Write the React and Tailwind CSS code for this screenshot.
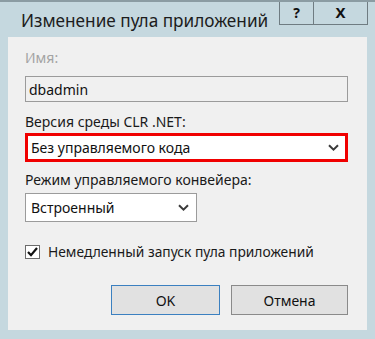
const font = { fontFamily: '"Noto Sans", "Liberation Sans", sans-serif' };

function Chevron() {
  return (
    <svg width="11" height="7" viewBox="0 0 11 7" className="shrink-0">
      <path d="M1 1.2 L5.5 5.6 L10 1.2" fill="none" stroke="#3a3a3a" strokeWidth="2" />
    </svg>
  );
}

function Label({ children, muted, className = "" }) {
  return (
    <div className={`text-[14px] leading-[20px] ${muted ? "text-[#a3a3a3]" : "text-[#1a1a1a]"} ${className}`}>
      {children}
    </div>
  );
}

export default function App() {
  return (
    <div
      className="w-[375px] h-[339px] bg-[#c5d8df] border-t-2 border-[#8b9ca3] flex flex-col overflow-hidden"
      style={font}
    >
      {/* title bar */}
      <div className="h-[35px] flex items-start shrink-0">
        <div className="pl-[21px] pt-[7px] text-[17.2px] leading-[24px] text-[#1c1c1c] flex-1 min-w-0 whitespace-nowrap">
          Изменение пула приложений
        </div>
        <div className="flex mr-[7px] -mt-[2px] shrink-0">
          <div className="w-[34px] h-[25px] border-l border-b border-[#6f7c82] flex items-center justify-center text-[14px] font-bold text-[#111]">
            ?
          </div>
          <div className="w-[55px] h-[25px] border-l border-r border-b border-[#6f7c82] flex items-center justify-center text-[15px] font-bold text-[#111]">
            X
          </div>
        </div>
      </div>

      {/* body */}
      <div className="mx-[8px] mb-[9px] flex-1 bg-[#f0f0f0] pl-[17px] pr-[19px] pt-[11px]">
        <Label muted>Имя:</Label>
        <div className="mt-[8px] h-[26px] border border-[#9b9b9b] bg-[#f0f0f0] flex items-center pl-[3px] text-[14px] text-[#111]">
          dbadmin
        </div>

        <Label className="mt-[10px]">Версия среды CLR .NET:</Label>
        <div className="mt-[1px] h-[29px] border-[3px] border-[#f00000] bg-white flex items-center pl-[3px] pr-[6px] text-[14px] text-[#111]">
          <span className="flex-1">Без управляемого кода</span>
          <Chevron />
        </div>

        <Label className="mt-[8px]">Режим управляемого конвейера:</Label>
        <div className="mt-[3px] w-[172px] h-[29px] border border-[#9b9b9b] bg-white flex items-center pl-[5px] pr-[7px] text-[14px] text-[#111]">
          <span className="flex-1">Встроенный</span>
          <Chevron />
        </div>

        <div className="mt-[20px] flex items-center gap-[8px]">
          <div className="w-[15px] h-[14px] border border-[#6b6b6b] bg-white flex items-center justify-center">
            <svg width="11" height="10" viewBox="0 0 11 10">
              <path d="M1 5 L4 8.2 L10 1" fill="none" stroke="#111" strokeWidth="2.2" />
            </svg>
          </div>
          <span className="text-[13.8px] leading-[20px] text-[#1a1a1a]">Немедленный запуск пула приложений</span>
        </div>

        <div className="mt-[23px] flex justify-end gap-[11px]">
          <button className="w-[109px] h-[30px] bg-[#e1e1e1] border border-[#3b80c0] text-[14px] text-[#111]">
            OK
          </button>
          <button className="w-[117px] h-[30px] bg-[#e1e1e1] border border-[#8a8a8a] text-[14px] text-[#111]">
            Отмена
          </button>
        </div>
      </div>
    </div>
  );
}
